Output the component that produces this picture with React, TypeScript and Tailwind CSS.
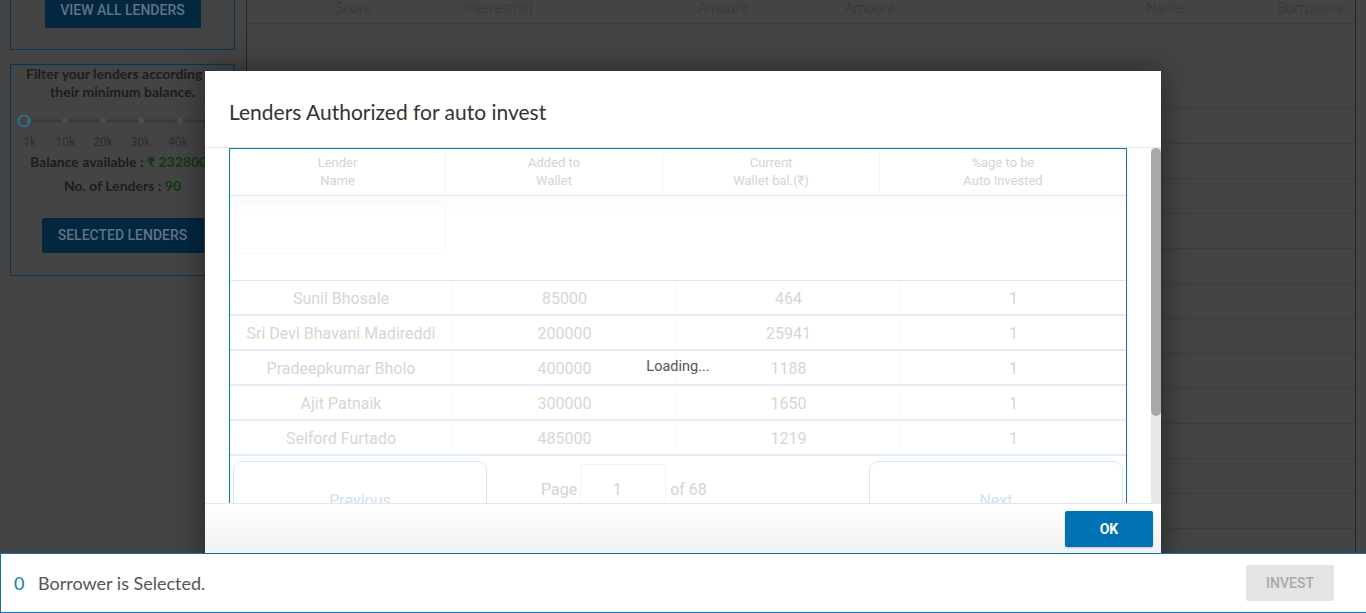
import React from "react";

const rows = [
  { name: "Sunil Bhosale", added: "85000", bal: "464", pct: "1" },
  { name: "Sri Devi Bhavani Madireddi", added: "200000", bal: "25941", pct: "1" },
  { name: "Pradeepkumar Bholo", added: "400000", bal: "1188", pct: "1" },
  { name: "Ajit Patnaik", added: "300000", bal: "1650", pct: "1" },
  { name: "Selford Furtado", added: "485000", bal: "1219", pct: "1" },
];

function Slider() {
  const dots = [54, 92, 130, 169, 207];
  return (
    <svg width="224" height="14" viewBox="0 0 224 14" className="block">
      <line x1="18" y1="7" x2="224" y2="7" stroke="#3a3a3a" strokeWidth="3" />
      {dots.map((d) => (
        <circle key={d} cx={d} cy="7" r="3" fill="#4e4e4e" />
      ))}
      <circle cx="13" cy="7" r="5.5" fill="#444" stroke="#2b6f86" strokeWidth="2" />
      <circle cx="18" cy="7" r="2" fill="#2b6f86" />
    </svg>
  );
}

function BackgroundPage() {
  const headCells = [
    { w: "w-[89px]", t: "" },
    { w: "w-[129px]", t: "Score" },
    { w: "w-[233px]", t: "Interest(%)" },
    { w: "w-[147px]", t: "Amount" },
    { w: "w-[301px]", t: "Amount" },
    { w: "w-[131px]", t: "Name" },
    { w: "flex-1", t: "Borrowers" },
  ];
  return (
    <div className="flex h-full">
      <aside className="w-[246px] shrink-0 pl-[10px] pr-[11px]">
        <div className="h-[50px] border border-t-0 border-[#0b3550] flex items-end justify-center pb-[21px]">
          <div className="w-[156px] h-[36px] bg-[#02273f] text-[#5f7383] font-['Roboto',sans-serif] font-medium text-[14px] flex items-center justify-center rounded-[2px]">
            VIEW ALL LENDERS
          </div>
        </div>
        <div className="mt-[14px] h-[212px] border border-[#0b3550] flex flex-col items-stretch text-[#1d1d1d]">
          <p className="text-[14px] leading-[18px] font-bold text-center whitespace-nowrap">
            Filter your lenders according to
            <br />
            their minimum balance.
          </p>
          <div className="mt-[13px] h-[14px]">
            <Slider />
          </div>
          <div className="mt-[6px] flex text-[12px] leading-[16px] text-[#2e2e2e] font-['Roboto',sans-serif]">
            <span className="w-[34px] ml-[2px] text-center">1k</span>
            <span className="w-[38px] text-center">10k</span>
            <span className="w-[38px] text-center">20k</span>
            <span className="w-[38px] text-center">30k</span>
            <span className="w-[38px] text-center">40k</span>
            <span className="w-[38px] text-center">50k</span>
          </div>
          <p className="mt-[3px] text-[14px] leading-[18px] font-bold whitespace-nowrap pl-[19px]">
            Balance available : <span className="text-[#113811]">₹ 2328000</span>
          </p>
          <p className="mt-[6px] text-[14px] leading-[18px] font-bold text-center">
            No. of Lenders : <span className="text-[#113811]">90</span>
          </p>
          <div className="mt-[23px] flex justify-center">
            <div className="w-[162px] h-[35px] bg-[#02273f] text-[#5f7383] font-['Roboto',sans-serif] font-medium text-[14px] flex items-center justify-center rounded-[2px]">
              SELECTED LENDERS
            </div>
          </div>
        </div>
      </aside>
      <main className="w-[1110px] shrink-0 border-l border-r border-[#0e2c40] h-full font-['Open_Sans',sans-serif] font-light text-[14px] text-[#363636]">
        <div className="h-[24px] border-b border-[#3a3e42] flex leading-[16px]">
          {headCells.map((c, i) => (
            <div key={i} className={`${c.w} shrink-0 whitespace-nowrap`}>
              {c.t}
            </div>
          ))}
        </div>
        <div className="h-[85px] border-b border-[#3a3e42]" />
        {Array.from({ length: 14 }).map((_, i) => (
          <div key={i} className="h-[35px] border-b border-[#3a3e42]" />
        ))}
      </main>
    </div>
  );
}

function Modal() {
  const headers = [
    ["Lender", "Name"],
    ["Added to", "Wallet"],
    ["Current", "Wallet bal.(₹)"],
    ["%age to be", "Auto Invested"],
  ];
  const headW = ["w-[216px]", "w-[217px]", "w-[217px]", "flex-1"];
  const bodyW = ["w-[223px]", "w-[224px]", "w-[224px]", "flex-1"];
  return (
    <div className="absolute left-[205px] top-[71px] w-[956px] h-[500px] bg-white shadow-[0_0_30px_rgba(0,0,0,0.45)] flex flex-col">
      <div className="h-[77px] shrink-0 border-b border-[#e6e6e6] px-[24px] pt-[29px]">
        <h2 className="text-[21px] leading-[24px] text-[#333] font-['Lato',sans-serif]">
          Lenders Authorized for auto invest
        </h2>
      </div>
      <div className="h-[355px] shrink-0 flex overflow-hidden">
        <div className="flex-1 pl-[24px] pr-[24px] overflow-hidden">
          <div className="relative w-[898px] border-l border-t border-r border-[#0a78bf] font-['Roboto',sans-serif]">
            <div className="h-[47px] flex border-b border-[#d9e8f4] text-[13px] leading-[18px] text-[#d4d4d4]">
              {headers.map((h, i) => (
                <div
                  key={i}
                  className={`${headW[i]} shrink-0 flex flex-col items-center justify-center ${i < 3 ? "border-r border-[#f5f5f5]" : ""}`}
                >
                  <span>{h[0]}</span>
                  <span>{h[1]}</span>
                </div>
              ))}
            </div>
            <div className="h-[85px] border-b border-[#dbe9f5] bg-gradient-to-b from-[#fbfbfb] via-white via-[20%] to-white pt-[5px] pl-[5px]">
              <div className="w-[211px] h-[53px] rounded-[4px] border border-[#f7f7f7]" />
            </div>
            {rows.map((r) => (
              <div key={r.name} className="h-[35px] flex border-b-2 border-[#e2edf7] text-[16px] text-[#d6d6d6]">
                {[r.name, r.added, r.bal, r.pct].map((v, i) => (
                  <div
                    key={i}
                    className={`${bodyW[i]} shrink-0 flex items-center justify-center pt-[2px] whitespace-nowrap ${i < 3 ? "border-r border-[#fafafa]" : ""}`}
                  >
                    {v}
                  </div>
                ))}
              </div>
            ))}
            <div className="flex pt-[5px] px-[3px] text-[16px]">
              <div className="w-[254px] h-[78px] rounded-[9px] border border-[#d6e7f5] flex items-center justify-center pt-[2px] text-[#cfe2f2]">
                Previous
              </div>
              <div className="flex-1 flex items-start pl-[54px] pt-[3px] text-[#d4d4d4]">
                <span className="h-[52px] flex items-center">Page</span>
                <div className="ml-[3px] w-[86px] h-[52px] border border-[#f3f3f3] rounded-[3px] flex items-center justify-center pr-[12px]">
                  1
                </div>
                <span className="ml-[4px] h-[52px] flex items-center">of 68</span>
              </div>
              <div className="w-[254px] h-[78px] rounded-[9px] border border-[#d6e7f5] flex items-center justify-center pt-[2px] text-[#cfe2f2]">
                Next
              </div>
            </div>
            <div className="absolute left-0 right-0 top-[209px] flex justify-center text-[14.5px] leading-[18px] text-[#555]">
              Loading...
            </div>
          </div>
        </div>
        <div className="w-[10px] shrink-0 bg-[#e8e8e8]">
          <div className="h-[268px] bg-[#a8a8a8] rounded-[5px]" />
        </div>
      </div>
      <div className="flex-1 border-t border-[#e6e6e6] bg-gradient-to-b from-white to-[#ececec] flex justify-end items-start pt-[7px] pr-[8px]">
        <button className="w-[88px] h-[36px] bg-[#0071b3] text-white text-[14px] font-bold font-['Roboto',sans-serif] rounded-[2px] shadow-[0_1px_2px_rgba(0,0,0,0.2)]">
          OK
        </button>
      </div>
    </div>
  );
}

export default function App() {
  return (
    <div className="relative w-[1366px] h-[613px] overflow-hidden bg-[#444444] font-['Lato',sans-serif]">
      <BackgroundPage />
      <Modal />
      <div className="absolute left-0 bottom-0 w-full h-[60px] bg-white border-t border-b border-l border-[#0b72b5] flex items-center justify-between pl-[13px] pr-[32px]">
        <div className="flex items-center text-[18px]">
          <span className="text-[#0a7bc1] w-[24px]">0</span>
          <span className="text-[#555]">Borrower is Selected.</span>
        </div>
        <button className="w-[88px] h-[36px] bg-[#e4e4e4] text-[#a9a9a9] text-[14px] font-medium font-['Roboto',sans-serif] rounded-[2px]">
          INVEST
        </button>
      </div>
    </div>
  );
}
